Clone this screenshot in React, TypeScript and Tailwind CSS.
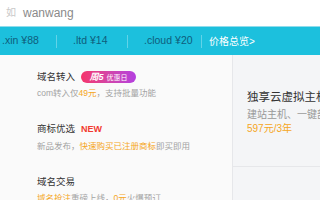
import React from 'react';

const FONT = "font-['Liberation_Sans','Noto_Sans_CJK_SC',sans-serif]";

const prices = [
  { tld: '.xin', price: '88', w: 'w-[57px]' },
  { tld: '.ltd', price: '14', w: 'w-[71px]' },
  { tld: '.cloud', price: '20', w: 'w-[74px]' },
];

export default function App() {
  return (
    <div className={`w-[320px] h-[200px] overflow-hidden bg-white ${FONT}`}>
      {/* 搜索框 */}
      <div className="h-[26px] flex items-center pl-[6px] text-[12px] leading-none">
        <span className="text-[#c9c9c9] text-[10px] mr-[7px]">如</span>
        <span className="text-[#8a8a8a]">wanwang</span>
      </div>

      {/* 价格条 */}
      <div className="h-[29px] bg-[#1cc0dd] border-t border-[#8fdcec] flex items-center text-[10.5px] whitespace-nowrap">
        {prices.map((p, i) => (
          <div key={p.tld} className={`${p.w} shrink-0 flex items-center ${i === 0 ? 'pl-[2px]' : 'pl-[16px]'}`}>
            <span className="text-[#0f5d7c]">{p.tld}</span>
            <span className="text-[#0f5d7c] ml-[3px]">¥{p.price}</span>
            <span className="ml-auto w-px h-[13px] bg-[#62d3e8]" />
          </div>
        ))}
        <span className="pl-[7px] text-white text-[10px]">价格总览&gt;</span>
      </div>

      <div className="flex h-[145px]">
        {/* 左侧列表 */}
        <div className="w-[232px] shrink-0 bg-[#fafafa] pl-[37px] whitespace-nowrap overflow-hidden">
          <div className="h-[52.5px] pt-[15px]">
            <div className="flex items-center h-[14px]">
              <span className="text-[9.5px] text-[#333]">域名转入</span>
              <span className="ml-[6px] h-[12px] w-[55px] rounded-full bg-gradient-to-r from-[#f5336a] to-[#b43ee0] flex items-center justify-center gap-[3px] text-white">
                <span className="text-[9px] font-bold italic leading-none">周5</span>
                <span className="text-[7px] leading-none">优惠日</span>
              </span>
            </div>
            <div className="mt-[2px] h-[14px] leading-[14px] text-[8.5px] text-[#a3a3a3]">
              com转入仅<span className="text-[#f5a623]">49元</span>，支持批量功能
            </div>
          </div>

          <div className="h-[52.5px] pt-[15px]">
            <div className="flex items-center h-[14px]">
              <span className="text-[9.5px] text-[#333]">商标优选</span>
              <span className="ml-[6px] text-[9px] font-bold text-[#f23b30]">NEW</span>
            </div>
            <div className="mt-[2px] h-[14px] leading-[14px] text-[8.5px] text-[#a3a3a3]">
              新品发布，<span className="text-[#f5a623]">快速购买已注册商标</span>即买即用
            </div>
          </div>

          <div className="h-[52.5px] pt-[15px]">
            <div className="flex items-center h-[14px]">
              <span className="text-[9.5px] text-[#333]">域名交易</span>
            </div>
            <div className="mt-[2px] h-[14px] leading-[14px] text-[8.5px] text-[#a3a3a3]">
              <span className="text-[#f5a623]">域名抢注</span>重磅上线，<span className="text-[#f5a623]">0元</span>火爆预订
            </div>
          </div>
        </div>

        {/* 右侧推荐 */}
        <div className="flex-1 bg-[#f4f5f7] border-l border-[#e6e7ea] whitespace-nowrap overflow-hidden">
          <div className="pl-[14px] pt-[34px] pb-[30px] border-b border-[#e6e7ea]">
            <div className="h-[16px] leading-[16px] text-[11.5px] text-[#333]">独享云虚拟主机</div>
            <div className="mt-[3px] h-[14px] leading-[14px] text-[10px] text-[#999]">建站主机、一键部署</div>
            <div className="h-[14px] leading-[14px] text-[10px] text-[#f5a623]">597元/3年</div>
          </div>
          <div className="pl-[14px] pt-[32px]">
            <div className="h-[16px] leading-[16px] text-[11.5px] text-[#333]">云服务器ECS</div>
          </div>
        </div>
      </div>
    </div>
  );
}
